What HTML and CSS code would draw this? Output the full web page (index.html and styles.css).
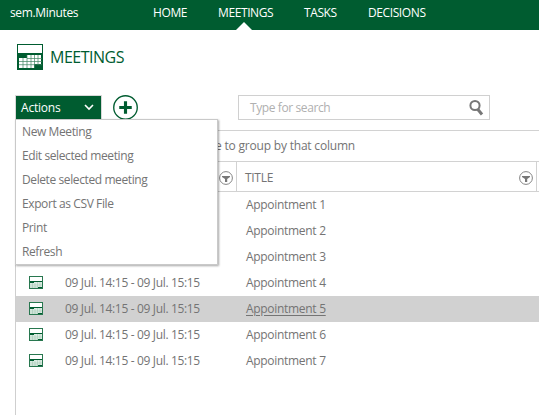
FILE: index.html
```
<!DOCTYPE html>
<html lang="en">
<head>
<meta charset="utf-8">
<title>sem.Minutes</title>
<link rel="stylesheet" href="styles.css">
</head>
<body>
<svg class="defs" aria-hidden="true">
  <symbol id="calendar" viewBox="0 0 26 26">
    <path fill="#005c30" d="M0 0h26v26H0z"/>
    <path fill="#fff" d="M1 1h24v8H1zM10 11h14v9h-7v4H2V14h8z"/>
    <path stroke="#3f8562" stroke-width=".7" d="M6 14v10M10 11v13M14 11v13M17.500 11v13M21 11v10M10 14.500h15M2 17.500h23M2 20.700h23" fill="none"/>
  </symbol>
  <symbol id="calendar-small" viewBox="0 0 14 13">
    <path fill="#28774f" d="M0 0h14v13H0z"/>
    <path fill="#fff" d="M1 1h12v4H1z"/>
    <path fill="#dcebe3" d="M1 7h4V6h8v5H9v1H1z"/>
    <path fill="#005c30" d="M1 5h12v1H5v1H1zM9 11h4v1H9z"/>
    <path stroke="#8dbaa3" stroke-width=".4" d="M3.500 7v5M6 7v5M8.500 6v6M11 6v5M1 9h12M1 11h8"/>
  </symbol>
  <symbol id="filter" viewBox="0 0 14 14">
    <circle cx="7" cy="7" r="6.400" fill="#fff" stroke="#858585"/>
    <path fill="#777" d="M3 5h8v1L8.200 8v3H6V8L3 6z"/>
  </symbol>
</svg>
<header class="topbar">
  <span class="brand">sem.Minutes</span>
  <nav class="nav">
    <a class="home">HOME</a>
    <a class="meetings active">MEETINGS</a>
    <a class="tasks">TASKS</a>
    <a class="decisions">DECISIONS</a>
  </nav>
</header>
<main>
  <div class="heading">
    <svg class="heading-icon"><use href="#calendar"/></svg>
    <h1>MEETINGS</h1>
  </div>
  <div class="toolbar">
    <div class="actions">
      <button class="actions-button"><span>Actions</span>
        <svg width="10" height="7" viewBox="0 0 10 7"><path d="M1 1l4 4 4-4" fill="none" stroke="#fff" stroke-width="1.600"/></svg>
      </button>
      <ul class="menu">
        <li>New Meeting</li>
        <li>Edit selected meeting</li>
        <li>Delete selected meeting</li>
        <li>Export as CSV File</li>
        <li>Print</li>
        <li>Refresh</li>
      </ul>
    </div>
    <svg class="add" viewBox="0 0 24 24"><circle cx="12" cy="12" r="11.300" fill="#fff" stroke="#005c30" stroke-width="1.300"/><path d="M12 6v12M6 12h12" stroke="#005c30" stroke-width="3"/></svg>
    <div class="search">
      <span>Type for search</span>
      <svg width="15" height="17" viewBox="0 0 15 17"><circle cx="6" cy="6.500" r="4.600" fill="none" stroke="#777" stroke-width="2"/><path d="M8.500 10l4.500 5.500" stroke="#777" stroke-width="3"/></svg>
    </div>
  </div>
  <section class="grid">
    <div class="group"><span>Drag a column here to group by that column</span></div>
    <div class="columns">
      <div class="column date"><svg class="filter"><use href="#filter"/></svg></div>
      <div class="column title"><span>TITLE</span><svg class="filter"><use href="#filter"/></svg></div>
    </div>
    <div class="row"><svg><use href="#calendar-small"/></svg><span class="time"></span><span class="name">Appointment 1</span></div>
    <div class="row"><svg><use href="#calendar-small"/></svg><span class="time"></span><span class="name">Appointment 2</span></div>
    <div class="row"><svg><use href="#calendar-small"/></svg><span class="time"></span><span class="name">Appointment 3</span></div>
    <div class="row"><svg><use href="#calendar-small"/></svg><span class="time">09 Jul. 14:15 - 09 Jul. 15:15</span><span class="name">Appointment 4</span></div>
    <div class="row selected"><svg><use href="#calendar-small"/></svg><span class="time">09 Jul. 14:15 - 09 Jul. 15:15</span><span class="name">Appointment 5</span></div>
    <div class="row"><svg><use href="#calendar-small"/></svg><span class="time">09 Jul. 14:15 - 09 Jul. 15:15</span><span class="name">Appointment 6</span></div>
    <div class="row"><svg><use href="#calendar-small"/></svg><span class="time">09 Jul. 14:15 - 09 Jul. 15:15</span><span class="name">Appointment 7</span></div>
  </section>
</main>
</body>
</html>
```
FILE: styles.css
```
* { box-sizing: border-box; }
body { margin: 0; height: 415px; overflow: hidden; background: #fff; color: #747474; font: 12px/16px "Open Sans", "Noto Sans", sans-serif; white-space: nowrap; letter-spacing: -0.2px; }
.defs { display: none; }
.topbar { height: 30px; background: #005c30; color: #fff; display: flex; padding-left: 10px; line-height: 25px; }
.brand { width: 143px; letter-spacing: -0.35px; }
.nav { display: flex; }
.nav a { position: relative; height: 30px; letter-spacing: -0.4px; }
.home { width: 65px; }
.meetings { width: 86px; }
.tasks { width: 64px; }
.active::after { content: ""; position: absolute; left: 18px; bottom: 0; border: 8px solid transparent; border-top: 0; border-bottom-color: #fff; }
.heading { display: flex; align-items: center; height: 26px; margin: 14px 0 0 17px; }
.heading-icon { width: 26px; height: 26px; }
h1 { margin: 0 0 0 7px; font-size: 16px; font-weight: 400; line-height: 26px; color: #005c30; letter-spacing: -0.5px; }
.toolbar { display: flex; height: 25px; margin: 25px 0 0 15px; }
.actions { position: relative; width: 87px; }
.actions-button { display: flex; align-items: center; justify-content: space-between; width: 87px; height: 25px; padding: 0 7px 0 5px; border: 1px solid #d8d8d8; background: #005c30; color: #fff; font: inherit; letter-spacing: -0.2px; }
.menu { position: absolute; z-index: 2; left: 0; top: 24px; width: 203px; height: 146px; margin: 0; padding: 0 0 0 6px; list-style: none; background: #fff; border: 1px solid #c9c9c9; box-shadow: 1px 1px 2px rgba(0,0,0,.35); line-height: 24px; letter-spacing: -0.4px; }
.add { width: 25px; height: 25px; margin-left: 11px; }
.search { display: flex; align-items: center; justify-content: space-between; width: 252px; height: 25px; margin-left: 100px; padding: 0 5px 0 11px; border: 1px solid #d0d0d0; color: #b0b0b0; letter-spacing: -0.4px; }
.grid { height: 285px; margin: 10px 0 0 15px; border-left: 1px solid #cfcfcf; border-top: 1px solid #d2d2d2; }
.group { display: flex; justify-content: flex-end; width: 339px; height: 30px; line-height: 30px; }
.columns { display: flex; height: 31px; border-top: 1px solid #d2d2d2; border-bottom: 1px solid #d2d2d2; }
.column { display: flex; align-items: center; justify-content: space-between; border-right: 1px solid #d2d2d2; padding: 2px 3px 0 8px; letter-spacing: -0.3px; }
.date { width: 221px; justify-content: flex-end; }
.title { width: 300px; }
.filter { width: 14px; height: 14px; }
.row { display: flex; align-items: center; height: 26px; padding: 0 0 1px 13px; }
.row svg { width: 14px; height: 13px; margin-right: 22px; }
.time { width: 181px; letter-spacing: -0.34px; }
.name { letter-spacing: -0.3px; }
.selected { background: #d1d1d1; }
.selected .name { text-decoration: underline; text-underline-offset: 2px; }
```
